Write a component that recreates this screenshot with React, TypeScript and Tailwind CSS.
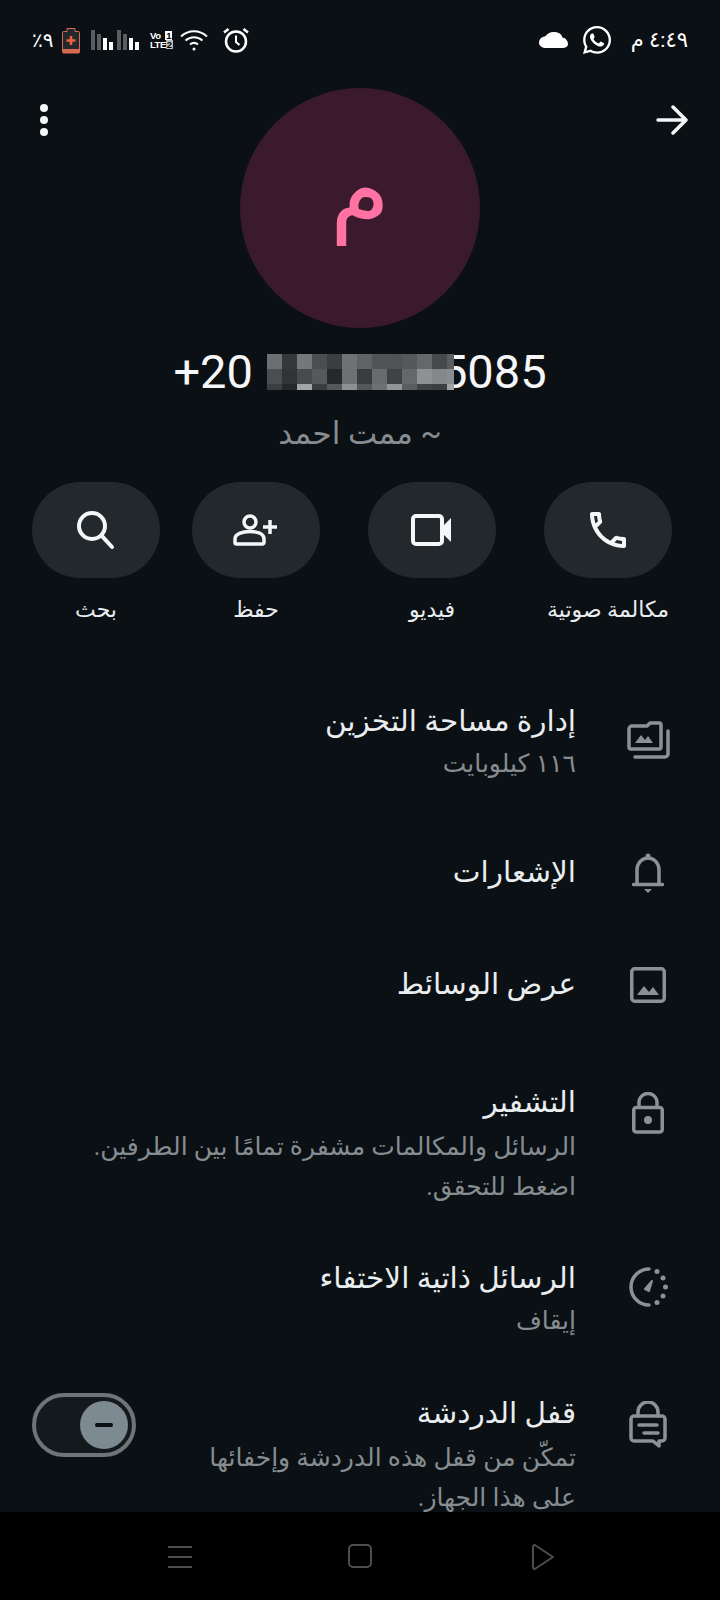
import { FaWhatsapp } from "react-icons/fa";

const FONT = "font-['Roboto','DejaVu_Sans',sans-serif]";

const MOSAIC = [
  ["#6b6f71", "#34383b", "#74787a", "#4a4e51", "#3a3e41", "#6e7274", "#5f6366", "#505457", "#4f5356", "#56595c", "#64686a", "#45494c", "#5a5e60"],
  ["#4a4e50", "#303437", "#474b4e", "#55595c", "#26292c", "#6c7072", "#383c3f", "#686c6e", "#3f4346", "#64686a", "#8e9193", "#858889", "#8a8d8f"],
  ["#3a3e41", "#24282b", "#a3a5a6", "#393d40", "#55595b", "#8d9091", "#55585b", "#6e7173", "#939597", "#5a5e60", "#3f4345", "#3b3f42", "#a0a2a3"],
];
const ROW_Y = [0, 15, 30];
const ROW_H = [15, 15, 6];

function Mosaic() {
  return (
    <svg width="187" height="36" viewBox="0 0 187 36" className="relative z-10 shrink-0">
      {MOSAIC.map((row, r) =>
        row.map((c, i) => <rect key={`${r}-${i}`} x={i * 15} y={ROW_Y[r]} width={i === 12 ? 7 : 15} height={ROW_H[r]} fill={c} />)
      )}
    </svg>
  );
}

function StatusBar() {
  return (
    <div className="h-[80px] flex items-center justify-between pr-[32px] pl-[32px]">
      <div className="flex items-center">
        <span className="text-[21px] leading-[28px] text-white whitespace-nowrap">٤:٤٩ م</span>
        <FaWhatsapp className="text-white w-[32px] h-[32px] mr-[18px]" />
        <svg width="29" height="16" viewBox="0 1 24 15" preserveAspectRatio="none" className="mr-[13px]" fill="#fff">
          <path d="M19.35 6.04C18.67 2.59 15.64 1 12 1 9.11 1 6.6 2.64 5.35 5.04 2.34 5.36 0 7.91 0 11c0 3 2.69 5 6 5h13c2.76 0 5-1.24 5-4 0-2.64-2.05-5.78-4.65-5.96z" />
        </svg>
      </div>
      <div className="flex items-center" dir="ltr">
        <span dir="rtl" className="text-[20px] leading-[24px] text-white w-[30px] text-left">٩٪</span>
        <svg width="18" height="27" viewBox="0 0 18 27">
          <path d="M5 1.5h8v3h3.5a1 1 0 0 1 1 1V25a1 1 0 0 1-1 1H1.5a1 1 0 0 1-1-1V5.5a1 1 0 0 1 1-1H5z" fill="#23282c" stroke="#d6694f" />
          <rect x="1" y="22" width="16" height="4" fill="#d6694f" />
          <path d="M9 9v9M4.5 13.500h9" stroke="#f0623c" strokeWidth="2.500" />
        </svg>
        <svg width="48" height="20" viewBox="0 0 48 20" className="ml-[11px]">
          <rect x="0" y="0" width="4" height="20" fill="#5a5e61" />
          <rect x="6" y="4" width="4" height="16" fill="#5a5e61" />
          <rect x="12" y="8" width="4" height="12" fill="#fff" />
          <rect x="18" y="12" width="4" height="8" fill="#fff" />
          <rect x="26" y="0" width="4" height="20" fill="#5a5e61" />
          <rect x="32" y="4" width="4" height="16" fill="#5a5e61" />
          <rect x="38" y="8" width="4" height="12" fill="#fff" />
          <rect x="44" y="12" width="4" height="8" fill="#fff" />
        </svg>
        <div className="ml-[11px] w-[22px] text-white font-bold text-[9.5px] leading-[9px] tracking-tighter font-['Liberation_Sans',sans-serif]">
          <div className="flex justify-between items-center"><span>Vo</span><span className="bg-white text-black px-[1px]">1</span></div>
          <div className="flex justify-between items-center"><span>LTE</span><span className="bg-[#bbb] text-black px-[1px]">2</span></div>
        </div>
        <svg width="28" height="22" viewBox="0 0 28 22" fill="none" stroke="#fff" strokeWidth="2" className="ml-[8px]">
          <path d="M1 7.500C8.500 .5 19.500 .5 27 7.500" />
          <path d="M5.500 11.500c5-4.500 12-4.500 17 0" />
          <path d="M10 15.500c2.500-2 5.500-2 8 0" />
          <circle cx="14" cy="20" r="1.500" fill="#fff" stroke="none" />
        </svg>
        <svg width="26" height="26" viewBox="0 0 26 26" fill="none" stroke="#fff" className="ml-[15px]">
          <circle cx="13" cy="14.500" r="10" strokeWidth="2.500" />
          <path d="M13 8.500v6.500l3.500 3" strokeWidth="2" />
          <path d="M1 5.500L5.500 2M25 5.500L20.500 2" strokeWidth="2.500" />
        </svg>
      </div>
    </div>
  );
}

function Action({ label, className, children }: { label: string; className?: string; children: React.ReactNode }) {
  return (
    <div className={`w-[128px] flex flex-col items-center ${className ?? ""}`}>
      <div className="w-[128px] h-[96px] rounded-[48px] bg-[#23282c] flex items-center justify-center">{children}</div>
      <span className="mt-[16px] text-[22px] leading-[32px] text-[#e9edef] whitespace-nowrap">{label}</span>
    </div>
  );
}

function Row({
  icon,
  title,
  sub,
  className,
  iconClass,
  trailing,
}: {
  icon: React.ReactNode;
  title: string;
  sub?: string[];
  className: string;
  iconClass: string;
  trailing?: React.ReactNode;
}) {
  return (
    <div className={`flex items-start ${className}`}>
      <div className={`w-[144px] shrink-0 flex justify-center ${iconClass}`}>{icon}</div>
      <div className="flex-1 min-w-0">
        <div className={`text-[29.5px] leading-[44px] text-[#e9edef] ${sub && sub.length > 1 ? "mb-[3px]" : "mb-[1px]"}`}>{title}</div>
        {sub?.map((s) => (
          <div key={s} className="text-[25px] leading-[40px] text-[#868d91]">{s}</div>
        ))}
      </div>
      {trailing}
    </div>
  );
}

const ICON = "#8b9195";

export default function App() {
  return (
    <div dir="rtl" className={`${FONT} w-[720px] h-[1600px] bg-[#0b1014] flex flex-col overflow-hidden`}>
      <div className="flex-1 min-h-0 overflow-hidden">
        <StatusBar />

        <div className="flex items-start justify-between px-[32px] mt-[8px]">
          <svg width="32" height="32" viewBox="0 0 32 32" fill="none" stroke="#f4f6f7" strokeWidth="3.500" strokeLinecap="round" strokeLinejoin="round" className="mt-[16px]">
            <path d="M2 16h27M17 3l13 13-13 13" />
          </svg>
          <div className="w-[240px] h-[240px] rounded-full bg-[#3b1a2d] flex items-center justify-center pb-[36px] text-[96px] leading-none text-[#ff72a1]">
            م
          </div>
          <div className="w-[32px] flex flex-col items-end gap-[4px] mt-[16px] pl-[8px]">
            <div className="w-[8px] h-[8px] rounded-full bg-[#f4f6f7]" />
            <div className="w-[8px] h-[8px] rounded-full bg-[#f4f6f7]" />
            <div className="w-[8px] h-[8px] rounded-full bg-[#f4f6f7]" />
          </div>
        </div>

        <div dir="ltr" className="mt-[20px] flex justify-center items-center text-[47px] leading-[48px] text-[#f4f6f7]">
          <span>+20</span>
          <span className="w-[14px]" />
          <Mosaic />
          <span className="-ml-[13px]">5085</span>
        </div>
        <div className="mt-[18px] text-center text-[31px] leading-[40px] text-[#868d91]">~ ممت احمد</div>

        <div className="mt-[28px] flex pr-[48px]">
          <Action label="مكالمة صوتية">
            <svg width="48" height="48" viewBox="0 0 24 24" fill="#f4f6f7">
              <path d="M6.540 5c.06.89.21 1.760.45 2.590l-1.200 1.200c-.41-1.200-.67-2.470-.76-3.790h1.510m9.860 12.020c.85.24 1.720.39 2.600.45v1.490c-1.320-.09-2.590-.35-3.800-.75l1.200-1.190M7.500 3H4c-.55 0-1 .45-1 1 0 9.390 7.610 17 17 17 .55 0 1-.45 1-1v-3.490c0-.55-.45-1-1-1-1.240 0-2.450-.2-3.570-.57-.1-.04-.21-.05-.31-.05-.26 0-.51.1-.71.29l-2.200 2.200c-2.830-1.450-5.150-3.760-6.590-6.590l2.200-2.200c.28-.28.36-.67.25-1.020C8.700 6.450 8.500 5.250 8.500 4c0-.55-.45-1-1-1z" />
            </svg>
          </Action>
          <Action label="فيديو" className="mr-[48px]">
            <svg width="42" height="32" viewBox="0 0 42 32" fill="none">
              <rect x="2" y="2" width="29" height="28" rx="3" stroke="#f4f6f7" strokeWidth="4" />
              <path d="M31 13l9-9v24l-9-9z" fill="#f4f6f7" />
            </svg>
          </Action>
          <Action label="حفظ" className="mr-[48px]">
            <svg width="46" height="32" viewBox="0 0 46 32" fill="none" stroke="#f4f6f7" strokeWidth="3.500" strokeLinecap="round">
              <circle cx="17" cy="8" r="6" />
              <path d="M2 25c0-5 7-7.500 15-7.500S31 20 31 25v3.500a1.500 1.500 0 0 1-1.500 1.500h-26A1.500 1.500 0 0 1 2 28.500z" />
              <path d="M37 6v14M30 13h14" strokeLinecap="butt" />
            </svg>
          </Action>
          <Action label="بحث" className="mr-[32px]">
            <svg width="48" height="48" viewBox="0 0 24 24" fill="none" stroke="#f4f6f7" strokeWidth="2" strokeLinecap="round">
              <circle cx="10" cy="10" r="6.500" />
              <path d="M14.800 14.800l5.200 5.700" />
            </svg>
          </Action>
        </div>

        <Row
          className="mt-[73px]"
          iconClass="mt-[22px]"
          title="إدارة مساحة التخزين"
          sub={["١١٦ كيلوبايت"]}
          icon={
            <svg width="44" height="38" viewBox="0 0 44 38" fill="none" stroke={ICON} strokeWidth="3.500" strokeLinejoin="round" strokeLinecap="round">
              <path d="M3 8a3 3 0 0 1 3-3h15l3-3h9a2 2 0 0 1 2 2v22a2 2 0 0 1-2 2H5a2 2 0 0 1-2-2z" />
              <path d="M42 10v23a3 3 0 0 1-3 3H9" />
              <path d="M9 22l6-8 4 5 3-4 5 7z" fill={ICON} stroke="none" />
            </svg>
          }
        />
        <Row
          className="mt-[66px]"
          iconClass="mt-[3px]"
          title="الإشعارات"
          icon={
            <svg width="32" height="40" viewBox="0 0 32 40" fill="none" stroke={ICON} strokeWidth="3.500" strokeLinecap="round">
              <path d="M5 31V17C5 10 10 5 16 5s11 5 11 12v14" />
              <path d="M1.500 31.500h29" />
              <circle cx="16" cy="3" r="2.500" fill={ICON} stroke="none" />
              <path d="M12 36h8l-4 4z" fill={ICON} stroke="none" />
            </svg>
          }
        />
        <Row
          className="mt-[67px]"
          iconClass="mt-[5px]"
          title="عرض الوسائط"
          icon={
            <svg width="36" height="36" viewBox="0 0 36 36" fill="none" stroke={ICON} strokeWidth="3.500" strokeLinejoin="round">
              <rect x="1.750" y="1.750" width="32.500" height="32.500" rx="3" />
              <path d="M7 28l7-9 5 6 4-5 6 8z" fill={ICON} stroke="none" />
            </svg>
          }
        />
        <Row
          className="mt-[73px]"
          iconClass="mt-[12px]"
          title="التشفير"
          sub={["الرسائل والمكالمات مشفرة تمامًا بين الطرفين.", "اضغط للتحقق."]}
          icon={
            <svg width="32" height="42" viewBox="0 0 32 42" fill="none" stroke={ICON} strokeWidth="3.500" strokeLinejoin="round">
              <rect x="1.750" y="15.500" width="28.500" height="24.500" rx="2.500" />
              <path d="M7 15V10.500a9 9 0 0 1 18 0V15" />
              <circle cx="16" cy="28" r="4" fill={ICON} stroke="none" />
            </svg>
          }
        />
        <Row
          className="mt-[49px]"
          iconClass="mt-[11px]"
          title="الرسائل ذاتية الاختفاء"
          sub={["إيقاف"]}
          icon={
            <svg width="40" height="40" viewBox="0 0 40 40" fill="none" stroke={ICON} strokeWidth="3.500" strokeLinecap="round">
              <path d="M21 2a18 18 0 1 0 0 36" />
              <path d="M17 22l7-8-3 10z" fill={ICON} strokeWidth="2" strokeLinejoin="round" />
              <g fill={ICON} stroke="none">
                <circle cx="29" cy="4.500" r="2.500" />
                <circle cx="35" cy="11" r="2.500" />
                <circle cx="37.500" cy="20" r="2.500" />
                <circle cx="35" cy="29" r="2.500" />
                <circle cx="29" cy="35.500" r="2.500" />
              </g>
            </svg>
          }
        />
        <Row
          className="mt-[50px]"
          iconClass="mt-[10px]"
          title="قفل الدردشة"
          sub={["تمكّن من قفل هذه الدردشة وإخفائها", "على هذا الجهاز."]}
          trailing={
            <div dir="ltr" className="shrink-0 ml-[32px] mt-[2px] w-[104px] h-[64px] rounded-full border-4 border-[#6f7478] bg-[#14191d] flex items-center justify-end pr-[4px]">
              <div className="w-[48px] h-[48px] rounded-full bg-[#7e8a92] flex items-center justify-center">
                <div className="w-[18px] h-[4px] rounded-full bg-[#0b1014]" />
              </div>
            </div>
          }
          icon={
            <svg width="38" height="47" viewBox="0 0 38 47" fill="none" stroke={ICON} strokeWidth="3.500" strokeLinejoin="round" strokeLinecap="round">
              <path d="M9 15v-4a10 10 0 0 1 20 0v4" />
              <path d="M5 15h28a3 3 0 0 1 3 3v19a3 3 0 0 1-3 3h-3v5l-6-5H5a3 3 0 0 1-3-3V18a3 3 0 0 1 3-3z" />
              <path d="M10 24h18M15 32h14" />
            </svg>
          }
        />
      </div>

      <div dir="ltr" className="h-[88px] shrink-0 bg-black flex items-start pt-[31px] pl-[168px]">
        <div className="w-[24px] h-[22px] mt-[3px] flex flex-col justify-between">
          <div className="h-[2px] bg-[#4d4d4d]" />
          <div className="h-[2px] bg-[#4d4d4d]" />
          <div className="h-[2px] bg-[#4d4d4d]" />
        </div>
        <div className="ml-[156px] w-[24px] h-[24px] rounded-[5px] border-2 border-[#4d4d4d] mt-[1px]" />
        <svg width="24" height="28" viewBox="0 0 24 28" fill="none" stroke="#4d4d4d" strokeWidth="2" strokeLinejoin="round" className="ml-[159px]">
          <path d="M2 3.500a1.500 1.500 0 0 1 2.500-1L22 14 4.500 25.500a1.500 1.500 0 0 1-2.500-1z" />
        </svg>
      </div>
    </div>
  );
}
